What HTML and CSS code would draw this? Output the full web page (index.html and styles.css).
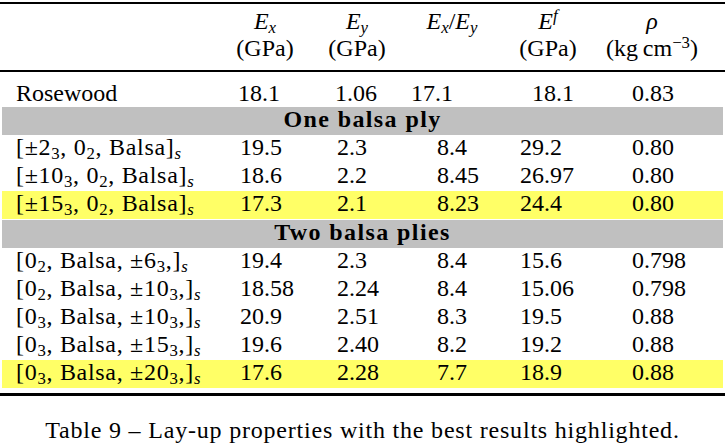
FILE: index.html
```html
<!DOCTYPE html>
<html lang="en">
<head>
    <meta charset="UTF-8">
    <meta name="viewport" content="width=device-width, initial-scale=1.0">
    <title>Table 9 - Lay-up properties</title>
    <link rel="stylesheet" href="styles.css">
</head>
<body>
    <div class="table">
        <div class="head">
            <div></div>
            <div><i>E</i><sub><i>x</i></sub><br>(GPa)</div>
            <div><i>E</i><sub><i>y</i></sub><br>(GPa)</div>
            <div><i>E</i><sub><i>x</i></sub>/<i>E</i><sub><i>y</i></sub><br>&nbsp;</div>
            <div><i>E</i><sup><i>f</i></sup><br>(GPa)</div>
            <div><i>ρ</i><br>(kg&thinsp;cm<sup>−3</sup>)</div>
        </div>

        <div class="body">
            <div class="row rose">
                <div class="name">Rosewood</div>
                <div>18.1</div>
                <div>1.06</div>
                <div>17.1</div>
                <div>18.1</div>
                <div>0.83</div>
            </div>

            <div class="group">One balsa ply</div>

            <div class="row">
                <div class="name">[±2<sub>3</sub>, 0<sub>2</sub>, Balsa]<sub><i>s</i></sub></div>
                <div>19.5</div>
                <div>2.3</div>
                <div>8.4</div>
                <div>29.2</div>
                <div>0.80</div>
            </div>
            <div class="row">
                <div class="name">[±10<sub>3</sub>, 0<sub>2</sub>, Balsa]<sub><i>s</i></sub></div>
                <div>18.6</div>
                <div>2.2</div>
                <div>8.45</div>
                <div>26.97</div>
                <div>0.80</div>
            </div>
            <div class="row best">
                <div class="name">[±15<sub>3</sub>, 0<sub>2</sub>, Balsa]<sub><i>s</i></sub></div>
                <div>17.3</div>
                <div>2.1</div>
                <div>8.23</div>
                <div>24.4</div>
                <div>0.80</div>
            </div>

            <div class="group second">Two balsa plies</div>

            <div class="row">
                <div class="name">[0<sub>2</sub>, Balsa, ±6<sub>3</sub>,]<sub><i>s</i></sub></div>
                <div>19.4</div>
                <div>2.3</div>
                <div>8.4</div>
                <div>15.6</div>
                <div>0.798</div>
            </div>
            <div class="row">
                <div class="name">[0<sub>2</sub>, Balsa, ±10<sub>3</sub>,]<sub><i>s</i></sub></div>
                <div>18.58</div>
                <div>2.24</div>
                <div>8.4</div>
                <div>15.06</div>
                <div>0.798</div>
            </div>
            <div class="row">
                <div class="name">[0<sub>3</sub>, Balsa, ±10<sub>3</sub>,]<sub><i>s</i></sub></div>
                <div>20.9</div>
                <div>2.51</div>
                <div>8.3</div>
                <div>19.5</div>
                <div>0.88</div>
            </div>
            <div class="row">
                <div class="name">[0<sub>3</sub>, Balsa, ±15<sub>3</sub>,]<sub><i>s</i></sub></div>
                <div>19.6</div>
                <div>2.40</div>
                <div>8.2</div>
                <div>19.2</div>
                <div>0.88</div>
            </div>
            <div class="row best">
                <div class="name">[0<sub>3</sub>, Balsa, ±20<sub>3</sub>,]<sub><i>s</i></sub></div>
                <div>17.6</div>
                <div>2.28</div>
                <div>7.7</div>
                <div>18.9</div>
                <div>0.88</div>
            </div>
        </div>
    </div>

    <p class="caption">Table 9 – Lay-up properties with the best results highlighted.</p>
</body>
</html>
```

FILE: styles.css
```css
body {
    margin: 0;
    padding: 0;
    font-family: "Liberation Serif", serif;
    font-size: 24px;
    color: #000;
    background-color: #fff;
}

sub,
sup {
    font-size: 0.7em;
    line-height: 0;
}

sub {
    vertical-align: -0.22em;
}

sup {
    vertical-align: 0.5em;
}

.table {
    margin-top: 2px;
    border-top: 2px solid #000;
}

/* header: two lines, centred over each column */
.head {
    display: grid;
    grid-template-columns: 220px 90px 94px 96px 96px 112px 1fr;
    padding: 4px 0 8px;
    line-height: 27px;
    text-align: center;
    border-bottom: 2px solid #000;
}

.body {
    padding: 0 2px 5px;
    border-bottom: 3px solid #000;
}

.row {
    display: grid;
    grid-template-columns: 238px 97px 100px 83px 112px 1fr;
    line-height: 24px;
    padding-bottom: 4px;
    white-space: nowrap;
}

.row .name {
    padding-left: 14px;
    letter-spacing: 0.7px;
}

.rose {
    grid-template-columns: 236px 97px 76px 121px 100px 1fr;
    line-height: 28px;
    padding-top: 7px;
    padding-bottom: 0;
}

.rose .name {
    letter-spacing: 0;
}

.group {
    background-color: #c0c0c0;
    font-weight: bold;
    letter-spacing: 1.4px;
    text-align: center;
    line-height: 24px;
    padding-bottom: 4px;
}

.group.second {
    margin-top: 1px;
}

.best {
    background-color: #ffff66;
}

.caption {
    margin: 20px 0 0;
    line-height: 28px;
    letter-spacing: 0.8px;
    text-align: center;
}
```
